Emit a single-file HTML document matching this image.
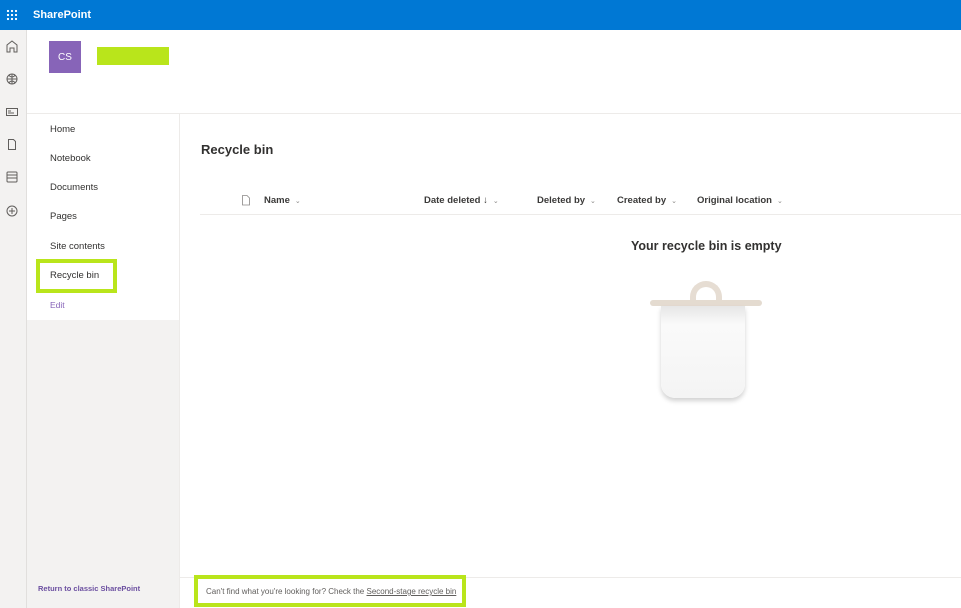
<!DOCTYPE html>
<html><head><style>
*{margin:0;padding:0;box-sizing:border-box}
body{width:961px;height:608px;overflow:hidden;background:#fff;font-family:"Liberation Sans",sans-serif;position:relative;color:#323130}
.a{position:absolute}
.nav div{position:absolute;left:50px;font-size:9.5px;color:#323130}
.col{position:absolute;top:195px;font-size:9.5px;font-weight:bold;color:#3b3a39}
.col span{font-weight:normal;color:#8a8886;font-size:7px;margin-left:5px}
</style></head><body>
<div class="a" style="left:0;top:0;width:961px;height:30px;background:#0078d4"></div>
<div class="a" style="left:6px;top:9px;width:12px;height:12px;background:radial-gradient(circle,#fff 1px,transparent 1.3px) 0 0/4px 4px"></div>
<div class="a" style="left:33px;top:9px;color:#fff;font-weight:bold;font-size:11px">SharePoint</div>
<div class="a" style="left:0;top:30px;width:27px;height:578px;background:#f3f2f1;border-right:1px solid #e1dfdd"></div>
<svg class="a" style="left:4px;top:38px" width="16" height="184" fill="none" stroke="#605e5c" stroke-width="1">
<path d="M3 14V7l5-4 5 4v7h-3v-4H6v4z"/>
<circle cx="8" cy="41" r="5"/><path d="M3 41h10M8 36v10M5 37.5c2 2 4 2 6 0M5 44.5c2-2 4-2 6 0"/>
<rect x="2.5" y="70.5" width="11" height="7"/><path d="M4 73h3M4 75h6"/>
<path d="M4.5 101.5h5l2 2v8h-7z"/>
<rect x="3" y="134" width="10" height="10" rx="1"/><path d="M3 137h10M3 140h10"/>
<circle cx="8" cy="173" r="5"/><path d="M8 170v6M5 173h6"/>
</svg>
<div class="a" style="left:27px;top:113px;width:934px;height:1px;background:#edebe9"></div>
<div class="a" style="left:49px;top:41px;width:32px;height:32px;background:#8764b8;color:#fff;font-size:10px;text-align:center;line-height:34px">CS</div>
<div class="a" style="left:97px;top:47px;width:72px;height:18px;background:#b9e51b"></div>
<div class="a" style="left:27px;top:320px;width:152px;height:288px;background:#f3f2f1"></div>
<div class="a" style="left:179px;top:114px;width:1px;height:494px;background:#edebe9"></div>
<div class="nav">
<div style="top:124px">Home</div><div style="top:153px">Notebook</div><div style="top:182px">Documents</div><div style="top:211px">Pages</div><div style="top:241px">Site contents</div><div style="top:270px">Recycle bin</div>
<div style="top:300px;color:#8764b8;font-size:8.5px">Edit</div>
</div>
<div class="a" style="left:36px;top:259px;width:81px;height:34px;border:4px solid #b9e51b"></div>
<div class="a" style="left:38px;top:584px;font-size:7.5px;color:#6b4fa0;font-weight:bold">Return to classic SharePoint</div>
<div class="a" style="left:201px;top:142px;font-size:13px;font-weight:bold;color:#323130">Recycle bin</div>
<svg class="a" style="left:241px;top:194px" width="10" height="12" fill="none" stroke="#8a8886" stroke-width="0.8"><path d="M1.5 1.5h4.5l2.5 2.5v7h-7z"/></svg>
<div class="col" style="left:264px">Name<span>⌄</span></div>
<div class="col" style="left:424px">Date deleted <b style="font-weight:normal">↓</b><span>⌄</span></div>
<div class="col" style="left:537px">Deleted by<span>⌄</span></div>
<div class="col" style="left:617px">Created by<span>⌄</span></div>
<div class="col" style="left:697px">Original location<span>⌄</span></div>
<div class="a" style="left:200px;top:214px;width:761px;height:1px;background:#edebe9"></div>
<div class="a" style="left:631px;top:239px;font-size:12.5px;font-weight:bold;color:#323130">Your recycle bin is empty</div>
<div class="a" style="left:690px;top:281px;width:32px;height:30px;border:6px solid #e6ddd3;border-bottom:none;border-radius:16px 16px 0 0"></div>
<div class="a" style="left:650px;top:300px;width:112px;height:6px;background:#e4dbd0;border-radius:3px"></div>
<div class="a" style="left:661px;top:306px;width:84px;height:92px;background:linear-gradient(#e6e6e6,#fafafa 20%,#f4f4f4);border-radius:0 0 14px 14px;box-shadow:0 3px 5px rgba(0,0,0,.18)"></div>
<div class="a" style="left:180px;top:577px;width:781px;height:1px;background:#edebe9"></div>
<div class="a" style="left:194px;top:575px;width:272px;height:32px;border:4px solid #b9e51b"></div>
<div class="a" style="left:206px;top:587px;font-size:8px;color:#605e5c">Can't find what you're looking for? Check the <u>Second-stage recycle bin</u></div>
</body></html>
